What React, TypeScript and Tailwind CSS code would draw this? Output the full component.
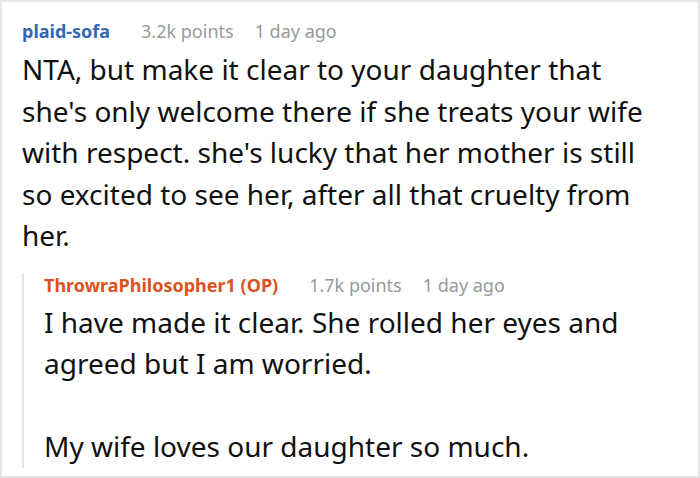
import React from "react";

const font = { fontFamily: '"Noto Sans", "Open Sans", sans-serif' };

function Meta({ author, color, points, time }: { author: string; color: string; points: string; time: string }) {
  return (
    <div className="flex items-baseline text-[18px] leading-[24px] whitespace-nowrap">
      <span className={`font-bold ${color}`}>{author}</span>
      <span className="ml-[31px] text-[#999999]">{points}</span>
      <span className="ml-[21px] text-[#999999]">{time}</span>
    </div>
  );
}

export default function App() {
  return (
    <div style={font} className="w-[700px] h-[478px] bg-white border-2 border-[#e6e6e6] overflow-hidden">
      <div className="pl-[20px] pt-[17px]">
        <Meta author="plaid-sofa" color="text-[#3467b4]" points="3.2k points" time="1 day ago" />
        <p className="mt-[6px] w-[640px] text-[28px] leading-[41.5px] text-[#111111]">
          NTA, but make it clear to your daughter that she's only welcome there if she treats your wife with respect. she's lucky that her mother is still so excited to see her, after all that cruelty from her.
        </p>
        <div className="mt-[16px] border-l-2 border-[#e6e6e6] pl-[20px] w-[640px]">
          <Meta author="ThrowraPhilosopher1 (OP)" color="text-[#d9531e]" points="1.7k points" time="1 day ago" />
          <p className="mt-[5px] text-[28px] leading-[41.5px] text-[#111111]">
            I have made it clear. She rolled her eyes and agreed but I am worried.
          </p>
          <p className="mt-[41.5px] mb-[-12px] text-[28px] leading-[41.5px] text-[#111111]">
            My wife loves our daughter so much.
          </p>
        </div>
      </div>
    </div>
  );
}
